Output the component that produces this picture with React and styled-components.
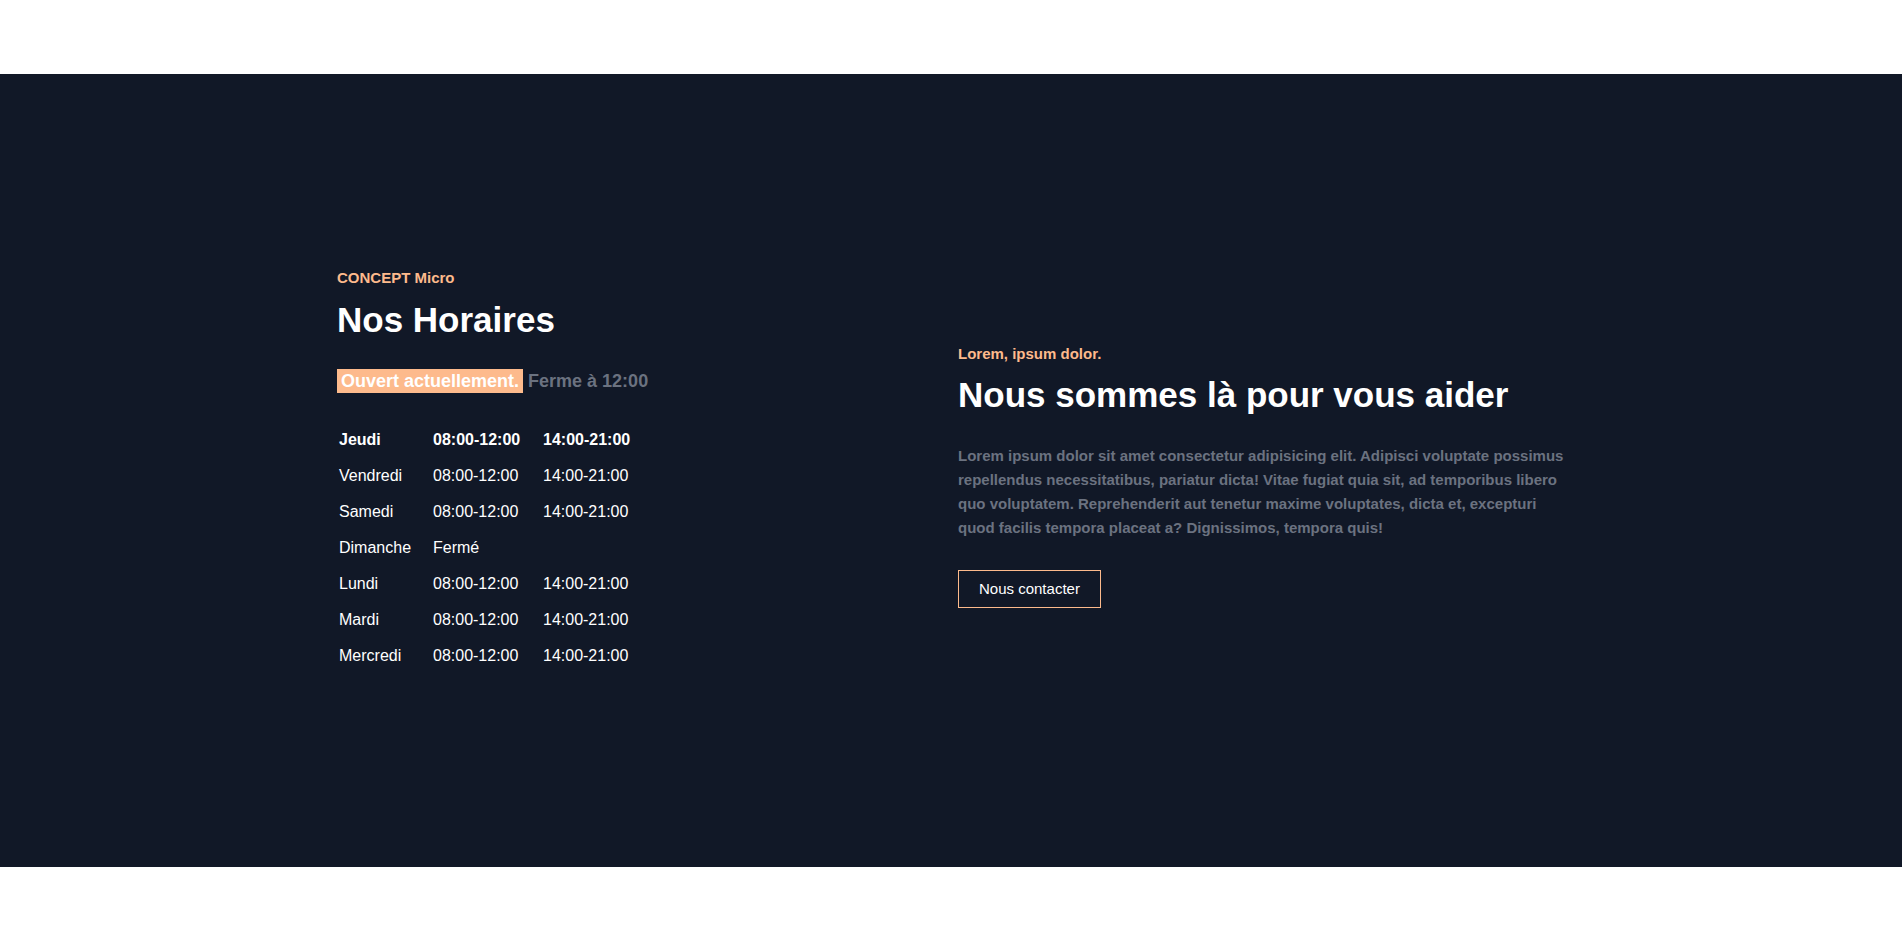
import React from "react";
import styled, { createGlobalStyle } from "styled-components";

const GlobalStyle = createGlobalStyle`
    * {
        box-sizing: border-box;
    }
    body {
        margin: 0;
        background: #ffffff;
        font-family: "Liberation Sans", Arial, sans-serif;
    }
`

const peach = "#fdba8c";

const Page = styled.div`
    padding: 74px 0;
`

const Section = styled.section`
    height: 793px;
    background: #111827;
    display: flex;
    align-items: center;
`

const Container = styled.div`
    margin-left: 337px;
    display: grid;
    grid-template-columns: 607px 616px;
    column-gap: 14px;
    align-items: center;
`

const Column = styled.div`
    display: flex;
    flex-direction: column;
    align-items: flex-start;
    padding-top: ${({ $offset }) => $offset || 0}px;
`

const Label = styled.span`
    font-size: 15px;
    line-height: 20px;
    font-weight: 700;
    color: ${peach};
`

const Title = styled.h2`
    margin: ${({ $gap }) => $gap}px 0 0;
    font-size: 35px;
    line-height: 40px;
    font-weight: 700;
    color: #ffffff;
`

const Status = styled.p`
    margin: 27px 0 0;
    font-size: 18px;
    line-height: 28px;
    font-weight: 700;
    color: #6b7280;

    mark {
        background: ${peach};
        color: #ffffff;
        padding: 2px 4px;
    }
`

const Table = styled.table`
    margin-top: 27px;
    border-collapse: collapse;
    color: #ffffff;
    font-size: 16px;
    line-height: 24px;
`

const Row = styled.tr`
    font-weight: ${({ $today }) => ($today ? 700 : 400)};
`

const Cell = styled.td`
    padding: 6px 2px;
    width: ${({ $w }) => $w}px;
    white-space: nowrap;
`

const Text = styled.p`
    margin: 29px 0 0;
    font-size: 15px;
    line-height: 24px;
    font-weight: 700;
    color: #6b7280;
`

const Button = styled.a`
    margin-top: 30px;
    display: inline-block;
    padding: 10px 20px;
    border: 1px solid ${peach};
    color: #ffffff;
    font-size: 15px;
    line-height: 16px;
    text-decoration: none;
    cursor: pointer;
`

const hours = [
    { day: "Jeudi", slots: ["08:00-12:00", "14:00-21:00"], today: true },
    { day: "Vendredi", slots: ["08:00-12:00", "14:00-21:00"] },
    { day: "Samedi", slots: ["08:00-12:00", "14:00-21:00"] },
    { day: "Dimanche", slots: ["Fermé"] },
    { day: "Lundi", slots: ["08:00-12:00", "14:00-21:00"] },
    { day: "Mardi", slots: ["08:00-12:00", "14:00-21:00"] },
    { day: "Mercredi", slots: ["08:00-12:00", "14:00-21:00"] },
]

const App = () => {
    return (
        <Page>
            <GlobalStyle />
            <Section>
                <Container>
                    <Column>
                        <Label>CONCEPT Micro</Label>
                        <Title $gap={12}>Nos Horaires</Title>
                        <Status>
                            <mark>Ouvert actuellement.</mark> Ferme à 12:00
                        </Status>
                        <Table>
                            <tbody>
                                {hours.map((h) => (
                                    <Row key={h.day} $today={h.today}>
                                        <Cell $w={94}>{h.day}</Cell>
                                        <Cell $w={110}>{h.slots[0]}</Cell>
                                        <Cell>{h.slots[1]}</Cell>
                                    </Row>
                                ))}
                            </tbody>
                        </Table>
                    </Column>

                    <Column $offset={10}>
                        <Label>Lorem, ipsum dolor.</Label>
                        <Title $gap={11}>Nous sommes là pour vous aider</Title>
                        <Text>
                            Lorem ipsum dolor sit amet consectetur adipisicing elit. Adipisci voluptate possimus
                            repellendus necessitatibus, pariatur dicta! Vitae fugiat quia sit, ad temporibus libero
                            quo voluptatem. Reprehenderit aut tenetur maxime voluptates, dicta et, excepturi
                            quod facilis tempora placeat a? Dignissimos, tempora quis!
                        </Text>
                        <Button>Nous contacter</Button>
                    </Column>
                </Container>
            </Section>
        </Page>
    )
}

export default App
